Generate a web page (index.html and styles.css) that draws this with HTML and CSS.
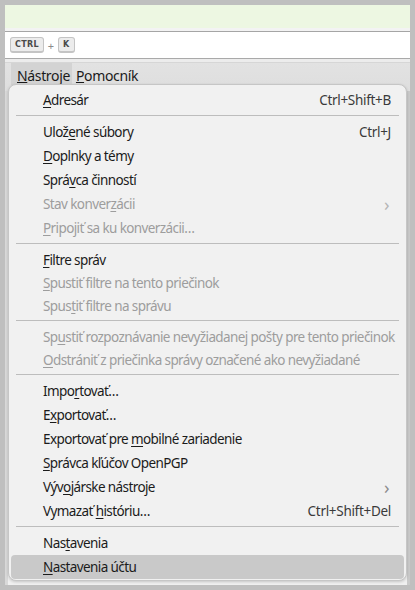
FILE: index.html
```html
<!DOCTYPE html>
<html lang="sk">
<head>
<meta charset="utf-8">
<link rel="stylesheet" href="styles.css">
</head>
<body>
<div class="win">
  <div class="notice"></div>
  <div class="gap"></div>
  <div class="hintbar">
    <kbd class="key">CTRL</kbd><span class="plus">+</span><kbd class="key">K</kbd>
  </div>
  <div class="gap2"></div>
  <div class="menubar">
    <span class="mb-item open"><u>N</u>ástroje</span>
    <span class="mb-item"><u>P</u>omocník</span>
  </div>
  <div class="content">
    <div class="side"></div>
    <div class="main"></div>
    <div class="scroll"></div>
  </div>

  <div class="menu">
    <div class="mi"><span class="lbl"><u>A</u>dresár</span><span class="sc">Ctrl+Shift+B</span></div>
    <div class="sep"></div>
    <div class="mi"><span class="lbl">Ulož<u>e</u>né súbory</span><span class="sc">Ctrl+J</span></div>
    <div class="mi"><span class="lbl"><u>D</u>oplnky a témy</span></div>
    <div class="mi"><span class="lbl">Sprá<u>v</u>ca činností</span></div>
    <div class="mi dis"><span class="lbl">Stav konver<u>z</u>ácii</span><span class="arr">&#x203A;</span></div>
    <div class="mi dis"><span class="lbl"><u>P</u>ripojiť sa ku konverzácii…</span></div>
    <div class="sep"></div>
    <div class="mi sm"><span class="lbl"><u>F</u>iltre správ</span></div>
    <div class="mi sm dis"><span class="lbl"><u>S</u>pustiť filtre na tento priečinok</span></div>
    <div class="mi sm dis"><span class="lbl">Spus<u>t</u>iť filtre na správu</span></div>
    <div class="sep"></div>
    <div class="mi sm dis"><span class="lbl">Sp<u>u</u>stiť rozpoznávanie nevyžiadanej pošty pre tento priečinok</span></div>
    <div class="mi sm dis"><span class="lbl"><u>O</u>dstrániť z priečinka správy označené ako nevyžiadané</span></div>
    <div class="sep"></div>
    <div class="mi"><span class="lbl">Impo<u>r</u>tovať…</span></div>
    <div class="mi"><span class="lbl">E<u>x</u>portovať…</span></div>
    <div class="mi"><span class="lbl">Exportovať pre <u>m</u>obilné zariadenie</span></div>
    <div class="mi"><span class="lbl"><u>S</u>právca kľúčov OpenPGP</span></div>
    <div class="mi"><span class="lbl">Výv<u>o</u>járske nástroje</span><span class="arr">&#x203A;</span></div>
    <div class="mi"><span class="lbl">Vymazať <u>h</u>istóriu…</span><span class="sc">Ctrl+Shift+Del</span></div>
    <div class="sep"></div>
    <div class="mi"><span class="lbl">Nas<u>t</u>avenia</span></div>
    <div class="mi hot"><span class="lbl"><u>N</u>astavenia účtu</span></div>
  </div>
</div>
</body>
</html>
```

FILE: styles.css
```css
* { box-sizing: border-box; }
html, body { margin: 0; padding: 0; }
body {
  background: #bfbfbf;
  width: 415px;
  height: 590px;
  overflow: hidden;
  font-family: "Noto Sans", "Open Sans", sans-serif;
}
.win {
  position: relative;
  margin: 5px;
  height: 580px;
  background: #e4e4e4;
  display: flex;
  flex-direction: column;
}
.notice {
  height: 23px;
  background: #edf7e2;
}
.gap {
  height: 4px;
  background: #f3f3f3;
  border-bottom: 1px solid #a5a5a5;
}
.hintbar {
  height: 27px;
  background: #ffffff;
  border-bottom: 1px solid #a9a9a9;
  display: flex;
  align-items: center;
  padding-left: 5px;
  gap: 3px;
}
.key {
  font-family: "DejaVu Sans", sans-serif;
  font-size: 8px;
  font-weight: bold;
  color: #4a4a4a;
  background: #ececec;
  border: 1px solid #c4c4c4;
  border-bottom-width: 2px;
  border-radius: 3px;
  padding: 2px 4px 1px;
  line-height: 10px;
  letter-spacing: 0.3px;
}
.plus {
  color: #8a8a8a;
  font-size: 11px;
  padding: 0 1px;
}
.gap2 {
  height: 4px;
  background: #ececec;
  border-bottom: 1px solid #d6d6d6;
}
.menubar {
  height: 28px;
  background: linear-gradient(#e2e2e2, #dedede);
  display: flex;
  align-items: stretch;
  padding-left: 6px;
}
.mb-item {
  font-family: "Noto Sans", sans-serif;
  font-size: 14px;
  letter-spacing: -0.35px;
  color: #1a1a1a;
  padding: 3px 2px 0 4px;
  height: 22px;
}
.mb-item.open {
  background: #d3d3d3;
  padding: 3px 2px 0 6px;
}
.content {
  flex: 1;
  display: flex;
}
.side { width: 3px; background: #d9d9d9; }
.main { flex: 1; background: #f0f0f0; }
.scroll { width: 3px; background: #c9c9c9; }

.menu {
  position: absolute;
  left: 3px;
  top: 79px;
  width: 399px;
  background: #f1f1f1;
  border: 1px solid #c6c6c6;
  border-radius: 8px;
  padding: 3px 2px 1px;
  box-shadow: 0 1px 3px rgba(0,0,0,0.18);
  display: flex;
  flex-direction: column;
}
.mi {
  height: 24px;
  flex: none;
  display: flex;
  align-items: center;
  padding: 0 13px 0 32px;
  font-size: 13.5px;
  letter-spacing: -0.6px;
  color: #1b1b1b;
  border-radius: 4px;
  white-space: nowrap;
}
.mi.sm { height: 23px; }
.mi .lbl { flex: 1; }
.mi u { text-decoration-thickness: 1px; text-underline-offset: 2px; }
.mi .sc { color: #3a3a3a; letter-spacing: -0.3px; }
.mi .arr {
  color: #8c8c8c;
  font-size: 18px;
  line-height: 1;
  padding-right: 2px;
}
.mi.dis { color: #9d9d9d; }
.mi.dis .arr { color: #b5b5b5; }
.mi.hot { background: #c9c9c9; }
.sep {
  flex: none;
  height: 1px;
  background: #bdbdbd;
  margin: 3px 5px 4px 5px;
}
```
